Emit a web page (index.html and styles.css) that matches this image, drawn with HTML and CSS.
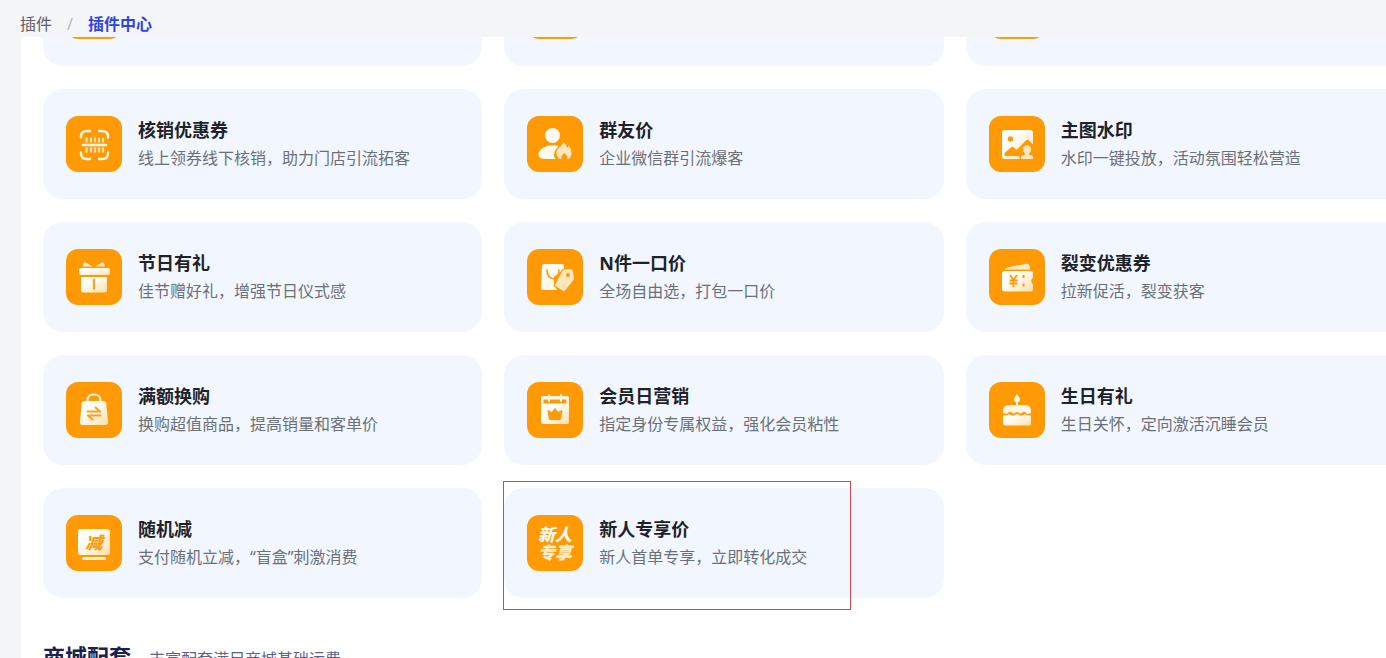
FILE: index.html
```html
<!DOCTYPE html>
<html lang="zh-CN">
<head>
  <meta charset="UTF-8" />
  <meta name="viewport" content="width=device-width, initial-scale=1.0"/>
  <title>插件中心</title>
  <link rel="stylesheet" href="styles.css">
</head>
<body>

  <!-- Breadcrumb -->
  <nav class="breadcrumb">
    <a href="#">插件</a>
    <span class="separator">/</span>
    <a href="#" class="current">插件中心</a>
  </nav>

  <main class="content">
    <!-- Shared fill for the icons -->
    <svg class="defs" width="0" height="0" aria-hidden="true">
      <defs>
        <linearGradient id="cream" x1="0" y1="0" x2="1" y2="1">
          <stop offset="0.35" stop-color="#fffdf8"/>
          <stop offset="1" stop-color="#ffdfaa"/>
        </linearGradient>
      </defs>
    </svg>

    <div class="plugin-grid">
      <!-- Row scrolled under the breadcrumb -->
      <div class="card"><span class="icon"></span></div>
      <div class="card"><span class="icon"></span></div>
      <div class="card"><span class="icon"></span></div>

      <div class="card">
        <svg class="icon" viewBox="0 0 56 56" aria-hidden="true">
          <g fill="none" stroke="#fff6e4" stroke-width="2.4" stroke-linecap="round">
            <path d="M15 21.500v-1q0-5.500 6-5.500h3M33 15h3q6 0 6 5.500v1M15 36.500v1q0 5.500 6 5.500h3M33 43h3q6 0 6-5.500v-1M17 29h23"/>
          </g>
          <path stroke="#ffe1ad" stroke-width="2.200" d="M20.500 21.500v5M25 21.500v5M29 21.500v5M33 21.500v5M37 21.500v5M20.500 31.500v5M25 31.500v5M29 31.500v5M33 31.500v5M37 31.500v5"/>
        </svg>
        <div class="card-text">
          <h3>核销优惠券</h3>
          <p>线上领券线下核销，助力门店引流拓客</p>
        </div>
      </div>

      <div class="card">
        <svg class="icon" viewBox="0 0 56 56" aria-hidden="true">
          <circle cx="25.500" cy="19.500" r="7.500" fill="#fffaf1"/>
          <path fill="#fffaf1" d="M28.500 43H18q-6.500 0-6.500-4.500 0-4 5-7 4-2.200 9-2.200 3.500 0 6 .8-4.500 5-4.500 8.900 0 2.300 1.500 4z"/>
          <path fill="#ffe6bd" d="M36.500 26q3 2.200 3.600 5.500 1.200-.7 1.600-2 2.800 3.600 2.800 7.500 0 4.600-4.200 6.500.7-3.700-3-6.500-3.800 2.800-3 6.500-4.800-1.900-4.800-6.500 0-3.600 3.600-6.300Q36 28.500 36.500 26z"/>
        </svg>
        <div class="card-text">
          <h3>群友价</h3>
          <p>企业微信群引流爆客</p>
        </div>
      </div>

      <div class="card">
        <svg class="icon" viewBox="0 0 56 56" aria-hidden="true">
          <rect x="13" y="14" width="31" height="29" rx="3" fill="url(#cream)"/>
          <circle cx="21.500" cy="23" r="2.700" fill="#ff9a04"/>
          <path fill="#ff9a04" d="M15.500 40v-3l7-6q1-.7 2 .2l3 2.800L37.500 24q1-1 2 0l5 5v14.500H31L30 40z"/>
          <circle cx="38" cy="33.500" r="4.200" fill="#ffe8c3"/>
          <path fill="#ffe8c3" d="M36 35h4v3.500l4 1.500v3H32v-3l4-1.500z"/>
        </svg>
        <div class="card-text">
          <h3>主图水印</h3>
          <p>水印一键投放，活动氛围轻松营造</p>
        </div>
      </div>

      <div class="card">
        <svg class="icon" viewBox="0 0 56 56" aria-hidden="true">
          <path fill="#fff8ec" d="M18.500 13l8 4.500H17q0-2.500 1.500-4.500z"/>
          <path fill="#ffe6bd" d="M37 13l-8 4.500h10q0-2.500-2-4.500z"/>
          <rect x="13" y="19" width="31" height="7" rx="2" fill="url(#cream)"/>
          <path fill="url(#cream)" d="M15 28h26v13q0 2.500-2.500 2.500h-21Q15 43.500 15 41z"/>
          <path stroke="#f5a52c" stroke-width="2.400" stroke-linecap="round" d="M28 31v8.500"/>
        </svg>
        <div class="card-text">
          <h3>节日有礼</h3>
          <p>佳节赠好礼，增强节日仪式感</p>
        </div>
      </div>

      <div class="card">
        <svg class="icon" viewBox="0 0 56 56" aria-hidden="true">
          <path fill="#fffaf1" d="M17 15h18q2 0 2 2v3l-10 8v7l3 6H16q-2 0-2-2l1-22q0-2 2-2z"/>
          <path fill="none" stroke="#ff9a04" stroke-width="1.600" stroke-linecap="round" d="M20 21q0 8 7 9 5-1 5-9"/>
          <path fill="#ffe6bd" stroke="#ff9a04" stroke-width="1.200" stroke-linejoin="round" d="M37 20l6-.5q3 0 3.600 3l1 7q.2 1.200-.6 2L38.500 42q-1 1-2.300.4l-8-4.600q-1.300-.8-.8-2.200l7.500-14q.8-1.500 2.100-1.600z"/>
          <circle cx="41" cy="26" r="2" fill="#ff9a04"/>
        </svg>
        <div class="card-text">
          <h3>N件一口价</h3>
          <p>全场自由选，打包一口价</p>
        </div>
      </div>

      <div class="card">
        <svg class="icon" viewBox="0 0 56 56" aria-hidden="true">
          <path fill="#ffebcb" d="M16 20.500q1-2 3-2.300l18.500-3.500q2.500-.4 3 2l.8 3.800z"/>
          <path fill="url(#cream)" d="M16 22h26q2 0 2 2v4.500q-3.500 3.500 0 7V40q0 2.500-2 2.500H16q-3 0-3-2.500V25q0-3 3-3z"/>
          <path fill="none" stroke="#ff9a04" stroke-width="1.800" d="M21 26l3.500 5 3.500-5M20.500 31.500h8M20.500 34.500h8M24.500 31v7"/>
          <path stroke="#ff9a04" stroke-width="2" d="M34.500 26v3M34.500 34.500v3"/>
        </svg>
        <div class="card-text">
          <h3>裂变优惠券</h3>
          <p>拉新促活，裂变获客</p>
        </div>
      </div>

      <div class="card">
        <svg class="icon" viewBox="0 0 56 56" aria-hidden="true">
          <path fill="none" stroke="#fff3df" stroke-width="2.200" d="M21.500 22v-3q0-6.500 6.500-6.500t6.500 6.500v3"/>
          <path fill="url(#cream)" d="M18 19h20q2 0 2.300 2.500L42 40q.2 3-2.500 3h-23q-2.700 0-2.500-3l1.700-18.500Q16 19 18 19z"/>
          <path fill="none" stroke="#f3a127" stroke-width="2" stroke-linejoin="round" stroke-linecap="round" d="M21.500 29.500H34l-4.500-4M34.500 33.500H22l4.500 4"/>
        </svg>
        <div class="card-text">
          <h3>满额换购</h3>
          <p>换购超值商品，提高销量和客单价</p>
        </div>
      </div>

      <div class="card">
        <svg class="icon" viewBox="0 0 56 56" aria-hidden="true">
          <path fill="#fff6e6" d="M14 21.500v-6q0-1.500 1.500-1.500h25q1.500 0 1.500 1.500v6H39.500v-4h-23v4z"/>
          <path stroke="#fff6e6" stroke-width="2" stroke-linecap="round" d="M22 13v6M34 13v6"/>
          <path fill="url(#cream)" d="M14 21.500h28V40q0 2-2 2H16q-2 0-2-2z"/>
          <path fill="#fa9b0c" stroke="#fa9b0c" stroke-width="1" stroke-linejoin="round" d="M21 28.500l4 2 3-4 3 4 4-2-1.500 9h-11z"/>
        </svg>
        <div class="card-text">
          <h3>会员日营销</h3>
          <p>指定身份专属权益，强化会员粘性</p>
        </div>
      </div>

      <div class="card">
        <svg class="icon" viewBox="0 0 56 56" aria-hidden="true">
          <path fill="#fff6e6" d="M28 12q3 3.500 3 5.500 0 2.200-2 2.800V23h7q6 0 6 6v2l-2.500 1q-2 0-3.500-2-1-1-2 0-2.500 2.500-4 1-2-2-4 0-1.500 1.500-4-1-1-1-2 0-1.500 2-3.500 2L14 31v-2q0-6 6-6h7v-2.700q-2-.6-2-2.800 0-2 3-5.500z"/>
          <path fill="url(#cream)" d="M14 33.500q4 .5 6-1.500 4 3 6 1 2-1.500 4 0 2 2 6-1 2 2 6 1.500V41q0 2.500-2 2.500H16q-2 0-2-2.500z"/>
        </svg>
        <div class="card-text">
          <h3>生日有礼</h3>
          <p>生日关怀，定向激活沉睡会员</p>
        </div>
      </div>

      <div class="card">
        <svg class="icon" viewBox="0 0 56 56" aria-hidden="true">
          <rect x="12" y="14" width="32" height="26" rx="3" fill="url(#cream)"/>
          <rect x="16" y="42" width="24" height="3" rx="1.500" fill="#fff1d8"/>
          <text x="28" y="34" class="icon-word">减</text>
        </svg>
        <div class="card-text">
          <h3>随机减</h3>
          <p>支付随机立减，“盲盒”刺激消费</p>
        </div>
      </div>

      <div class="card marked">
        <svg class="icon" viewBox="0 0 56 56" aria-hidden="true">
          <text x="28" y="26" class="icon-word light">新人</text>
          <text x="28" y="44" class="icon-word pale">专享</text>
        </svg>
        <div class="card-text">
          <h3>新人专享价</h3>
          <p>新人首单专享，立即转化成交</p>
        </div>
      </div>
    </div>

    <!-- Next section -->
    <header class="section-title">
      <h2>商城配套</h2>
      <p>丰富配套满足商城基础运费</p>
    </header>
  </main>

</body>
</html>
```

FILE: styles.css
```css
*,
*::after {
  box-sizing: border-box;
}

body {
  margin: 0;
  height: 100vh;
  display: flex;
  flex-direction: column;
  overflow: hidden;
  background: #f4f5f7;
  font-family: "Noto Sans", "Noto Sans CJK SC", sans-serif;
}

h2,
h3,
p {
  margin: 0;
}

/* Breadcrumb */
.breadcrumb {
  display: flex;
  flex-shrink: 0;
  gap: 15px;
  height: 37px;
  padding: 12px 20px 0;
  font-size: 16px;
  line-height: 24px;
}

.breadcrumb a {
  color: #606266;
  text-decoration: none;
}

.breadcrumb .separator {
  color: #b4b8bf;
}

.breadcrumb .current {
  color: #2f45e0;
  font-weight: bold;
}

/* Scrolled content panel */
.content {
  flex: 1;
  min-height: 0;
  margin-left: 21px;
  padding-left: 22px;
  background: #fff;
  overflow: hidden;
}

.defs {
  display: block;
}

.plugin-grid {
  display: grid;
  grid-template-columns: repeat(3, 1fr);
  gap: 23px 22px;
  margin-top: -81px;
  margin-right: -19px;
}

.card {
  position: relative;
  display: flex;
  gap: 16px;
  padding: 27px 23px;
  border-radius: 20px;
  background: #f2f7ff;
}

/* Highlighted plugin */
.marked::after {
  content: "";
  position: absolute;
  top: -7px;
  left: -1px;
  width: 348px;
  height: 129px;
  border: 1px solid #d9434a;
}

.icon {
  flex-shrink: 0;
  width: 56px;
  height: 56px;
  border-radius: 12px;
  background: #ff9a04;
}

.icon-word {
  fill: #f99d14;
  font-size: 17px;
  font-weight: 900;
  font-style: italic;
  text-anchor: middle;
}

.icon-word.light {
  fill: #fffaf0;
}

.icon-word.pale {
  fill: #ffedd0;
}

.card-text h3 {
  color: #1f2329;
  font-size: 18px;
  line-height: 28px;
}

.card-text p {
  color: #6b7078;
  font-size: 16px;
  line-height: 28px;
}

.section-title {
  display: flex;
  align-items: baseline;
  gap: 18px;
  padding-top: 42px;
}

.section-title h2 {
  color: #1c2250;
  font-size: 22px;
  line-height: 32px;
}

.section-title p {
  color: #5c6285;
  font-size: 16px;
}
```
